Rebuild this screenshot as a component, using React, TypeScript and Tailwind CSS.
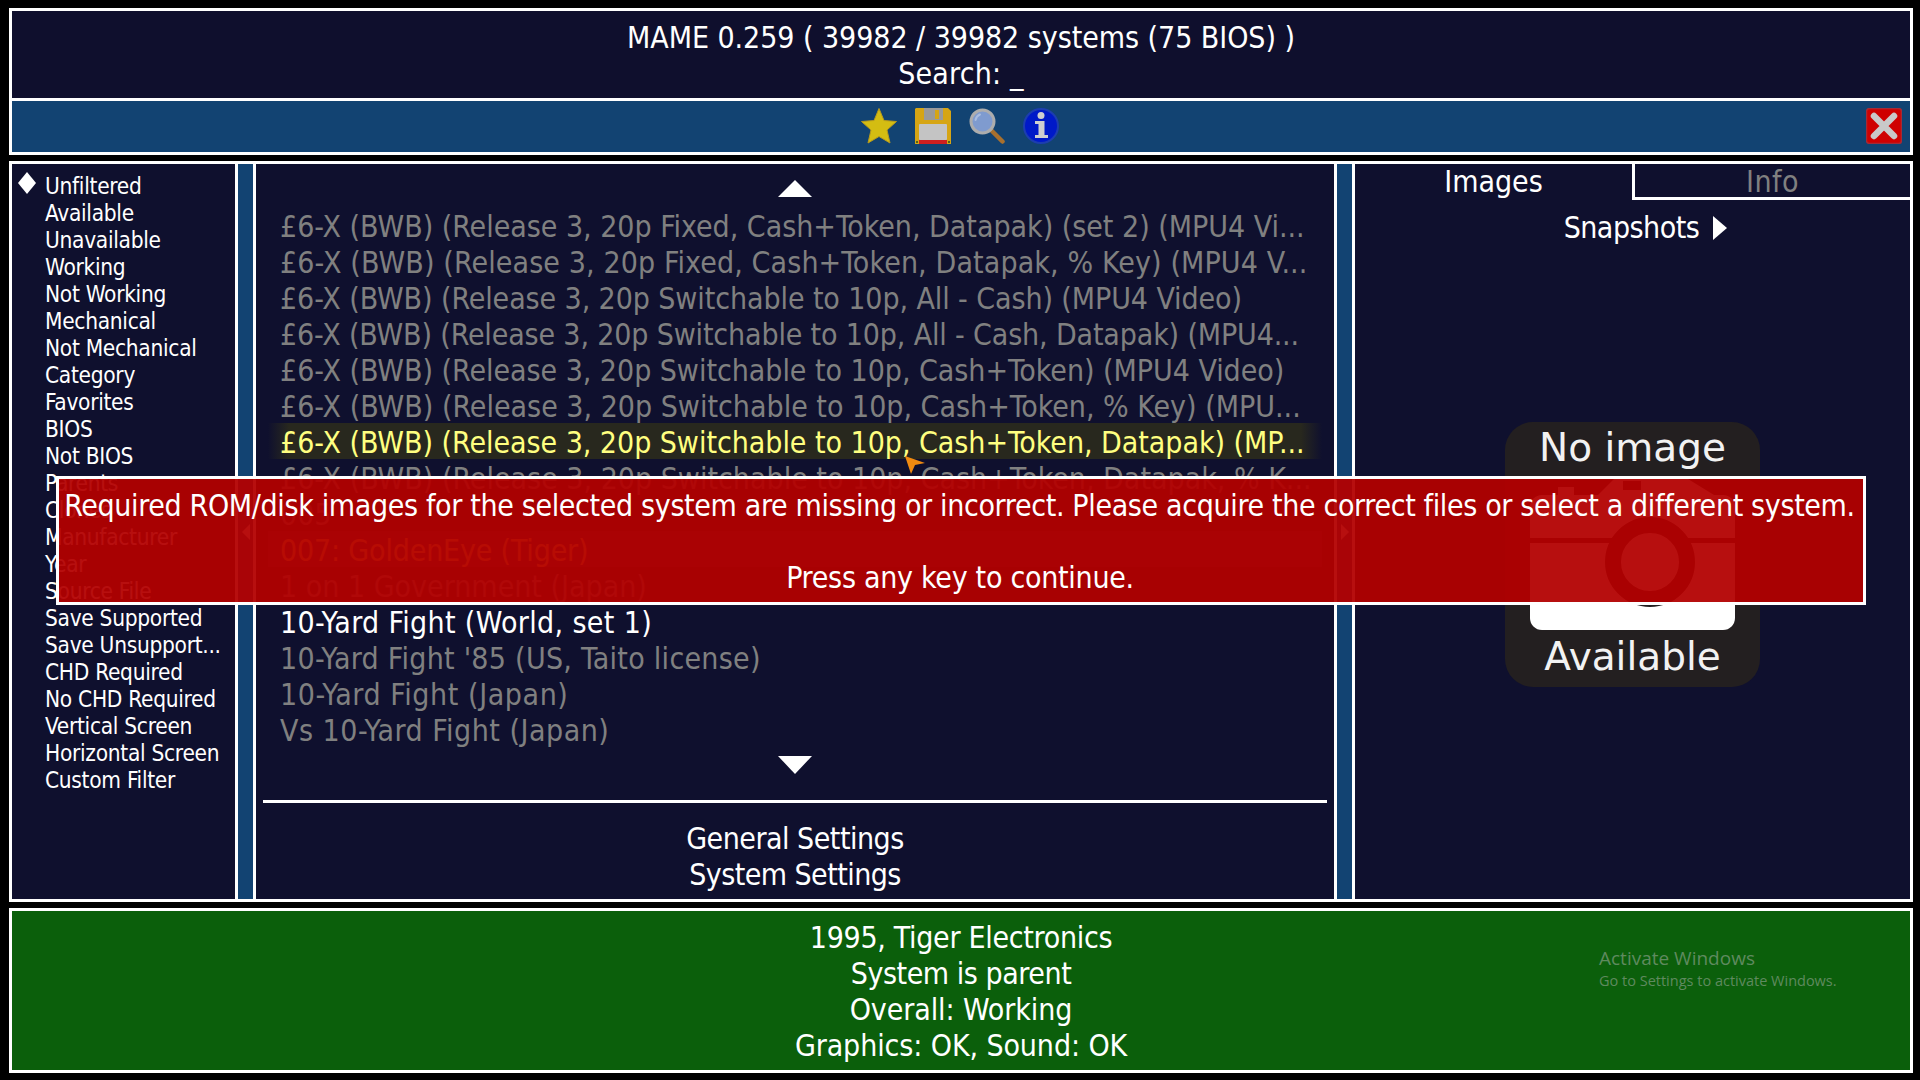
const FILTERS = [
  "Unfiltered", "Available", "Unavailable", "Working", "Not Working", "Mechanical", "Not Mechanical", "Category",
  "Favorites", "BIOS", "Not BIOS", "Parents", "Clones", "Manufacturer", "Year", "Source File", "Save Supported",
  "Save Unsupport...", "CHD Required", "No CHD Required", "Vertical Screen", "Horizontal Screen", "Custom Filter",
]

type Row = { name: string; kind?: "selected" | "hover" | "white"; fit: string }

// fit = small tracking so each line ends where the reference's does
const ROWS: Row[] = [
  { name: "£6-X (BWB) (Release 3, 20p Fixed, Cash+Token, Datapak) (set 2) (MPU4 Vi...", fit: "tracking-[-0.02px]" },
  { name: "£6-X (BWB) (Release 3, 20p Fixed, Cash+Token, Datapak, % Key) (MPU4 V...", fit: "tracking-[0.12px]" },
  { name: "£6-X (BWB) (Release 3, 20p Switchable to 10p, All - Cash) (MPU4 Video)", fit: "tracking-[-0.09px]" },
  { name: "£6-X (BWB) (Release 3, 20p Switchable to 10p, All - Cash, Datapak) (MPU4...", fit: "tracking-[-0.15px]" },
  { name: "£6-X (BWB) (Release 3, 20p Switchable to 10p, Cash+Token) (MPU4 Video)", fit: "tracking-[-0.035px]" },
  { name: "£6-X (BWB) (Release 3, 20p Switchable to 10p, Cash+Token, % Key) (MPU...", fit: "tracking-[0px]" },
  { name: "£6-X (BWB) (Release 3, 20p Switchable to 10p, Cash+Token, Datapak) (MP...", kind: "selected", fit: "tracking-[-0.035px]" },
  { name: "£6-X (BWB) (Release 3, 20p Switchable to 10p, Cash+Token, Datapak, % K...", fit: "tracking-[0px]" },
  { name: "005", fit: "tracking-[0px]" },
  { name: "007: GoldenEye (Tiger)", kind: "hover", fit: "tracking-[-0.17px]" },
  { name: "1 on 1 Government (Japan)", fit: "tracking-[0px]" },
  { name: "10-Yard Fight (World, set 1)", kind: "white", fit: "tracking-[0.35px]" },
  { name: "10-Yard Fight '85 (US, Taito license)", fit: "tracking-[0.27px]" },
  { name: "10-Yard Fight (Japan)", fit: "tracking-[0.58px]" },
  { name: "Vs 10-Yard Fight (Japan)", fit: "tracking-[0.5px]" },
]

function StarIcon() {
  return (
    <svg width="36" height="36" viewBox="0 0 36 36">
      <path d="M18 0.5 L23 12.5 L35.5 13.5 L26 22 L29 35 L18 28.5 L7 35 L10 22 L0.5 13.5 L13 12.5 Z" fill="#d4bd12" stroke="#b89a1c" strokeWidth="1" strokeLinejoin="round" />
    </svg>
  )
}

function FloppyIcon() {
  return (
    <svg width="36" height="36" viewBox="0 0 36 36">
      <path d="M1 0 H33 L36 3 V36 H0 V1 Z" fill="#d6a514" />
      <rect x="9" y="0" width="19" height="12" fill="#9a9a9a" />
      <rect x="20" y="2" width="4" height="9" fill="#d6a514" />
      <rect x="4" y="16" width="28" height="16" rx="1" fill="#c4c4c4" />
      <rect x="4" y="32" width="28" height="4" fill="#cf1f1f" />
      <rect x="1" y="33" width="2" height="2" fill="#55621a" />
      <rect x="33" y="33" width="2" height="2" fill="#55621a" />
    </svg>
  )
}

function SearchIcon() {
  return (
    <svg width="36" height="36" viewBox="0 0 36 36">
      <line x1="23" y1="23" x2="33.5" y2="33.5" stroke="#a8702e" strokeWidth="4.5" strokeLinecap="round" />
      <circle cx="13.5" cy="13.5" r="11.5" fill="#7f9bcf" stroke="#adadad" strokeWidth="3" />
      <path d="M6.5 12 A7.5 7.5 0 0 1 11 6.5" fill="none" stroke="#a9bde0" strokeWidth="2" strokeLinecap="round" />
    </svg>
  )
}

function InfoIcon() {
  return (
    <svg width="36" height="36" viewBox="0 0 36 36">
      <circle cx="18" cy="18" r="17" fill="#0019c8" stroke="#1c3db0" strokeWidth="2" />
      <circle cx="18" cy="7.5" r="3.5" fill="#cfcfcf" />
      <path d="M12 13 H21.5 V27 H25 V30 H12 V27 H15.5 V16 H12 Z" fill="#cfcfcf" />
    </svg>
  )
}

function CloseIcon() {
  return (
    <svg width="36" height="36" viewBox="0 0 36 36">
      <rect x="0.5" y="0.5" width="35" height="35" rx="3" fill="#cf0000" stroke="#a52a35" strokeWidth="1.5" />
      <path d="M8 8 L28 28 M28 8 L8 28" stroke="#c9c9c9" strokeWidth="6.5" strokeLinecap="round" />
    </svg>
  )
}

function Camera() {
  return (
    <svg width="205" height="160" viewBox="0 0 205 160">
      <path d="M68 25 L84 9 H158 L184 25 Z" fill="#ffffff" />
      <rect x="28" y="17" width="16" height="8" fill="#ffffff" />
      <rect x="93" y="11" width="18" height="9" fill="#231f20" />
      <path d="M12 25 H193 A12 12 0 0 1 205 37 V148 A12 12 0 0 1 193 160 H12 A12 12 0 0 1 0 148 V37 A12 12 0 0 1 12 25 Z" fill="#ffffff" />
      <rect x="0" y="68" width="205" height="5" fill="#231f20" />
      <circle cx="120" cy="92" r="37" fill="#ffffff" stroke="#231f20" strokeWidth="16" />
    </svg>
  )
}

export default function App() {
  return (
    <div className="relative w-[1920px] h-[1080px] bg-black overflow-hidden pl-[9px] pr-[7px] pt-[8px] text-white font-['DejaVu_Sans',sans-serif] [font-stretch:condensed] text-[30px] leading-[36px]">
      {/* Header + toolbar */}
      <div className="h-[147px] border-[3px] border-white flex flex-col">
        <div className="h-[87px] bg-[#0f0f2d] pt-[9px] text-center">
          <div className="tracking-[-0.05px]">MAME 0.259 ( 39982 / 39982 systems (75 BIOS) )</div>
          <div className="tracking-[0.2px]">Search: _</div>
        </div>
        <div className="h-[54px] border-t-[3px] border-white bg-[#124372] relative flex items-center justify-center gap-[18px] pr-[3px] pb-[1px]">
          <StarIcon />
          <FloppyIcon />
          <SearchIcon />
          <InfoIcon />
          <div className="absolute right-[8px] top-[7px]"><CloseIcon /></div>
        </div>
      </div>

      {/* Main panels */}
      <div className="mt-[6px] h-[741px] border-[3px] border-white bg-[#0f102e] flex">
        {/* Filters */}
        <div className="w-[223px] shrink-0 pt-[9px] pl-[33px] text-[22.5px] leading-[27px] tracking-[-0.3px] relative">
          {FILTERS.map((f, i) => (
            <div key={f} className="relative whitespace-nowrap">
              {i === 0 && <span className="absolute left-[-27px] top-[-1px] w-[18px] h-[22px] bg-white [clip-path:polygon(50%_0,100%_50%,50%_100%,0_50%)]" />}
              {f}
            </div>
          ))}
        </div>
        <div className="w-[21px] shrink-0 border-x-[3px] border-white bg-[#124372] flex items-center justify-center">
          <span className="w-0 h-0 border-y-[8px] border-y-transparent border-r-[8px] border-r-white" />
        </div>

        {/* System list */}
        <div className="w-[1078px] shrink-0 flex flex-col">
          <div className="h-[43px] pt-[16px] flex justify-center">
            <span className="w-0 h-0 border-x-[17px] border-x-transparent border-b-[17px] border-b-white" />
          </div>
          {ROWS.map(r => (
            <div
              key={r.name}
              className={`h-[36px] mx-[12px] pl-[12px] pt-[2px] whitespace-nowrap overflow-hidden ${r.fit} ${
                r.kind === "selected"
                  ? "text-[#ffff80] bg-[linear-gradient(90deg,#0f102e,#28281e_2%,#28281e_98%,#0f102e)]"
                  : r.kind === "hover"
                  ? "text-[#ffc040] bg-[#2a2a48]"
                  : r.kind === "white"
                  ? "text-white"
                  : "text-[#808080]"
              }`}
            >
              {r.name}
            </div>
          ))}
          <div className="h-[36px] pt-[9px] flex justify-center">
            <span className="w-0 h-0 border-x-[17px] border-x-transparent border-t-[18px] border-t-white" />
          </div>
          <div className="mt-[17px] mx-[7px] h-[3px] bg-white" />
          <div className="mt-[18px] text-center">
            <div className="tracking-[-0.5px]">General Settings</div>
            <div className="tracking-[-0.55px]">System Settings</div>
          </div>
        </div>
        <div className="w-[21px] shrink-0 border-x-[3px] border-white bg-[#124372] flex items-center justify-center">
          <span className="w-0 h-0 border-y-[8px] border-y-transparent border-l-[8px] border-l-white" />
        </div>

        {/* Images / info panel */}
        <div className="flex-1 flex flex-col items-center">
          <div className="w-full h-[36px] flex">
            <div className="w-[277px] text-center">Images</div>
            <div className="flex-1 border-l-[3px] border-b-[3px] border-white text-center text-[#808080] leading-[35px] tracking-[0.5px]">Info</div>
          </div>
          <div className="mt-[10px] h-[36px] flex items-center gap-[14px] pl-[26px]">
            <span className="tracking-[-0.5px]">Snapshots</span>
            <span className="w-0 h-0 border-y-[12px] border-y-transparent border-l-[14px] border-l-white" />
          </div>
          <div className="mt-[176px] w-[255px] h-[265px] rounded-[28px] bg-[#231f20] flex flex-col items-center text-[#f2f2f2] font-['DejaVu_Sans',sans-serif] [font-stretch:normal] text-[39px] leading-[48px]">
            <div className="h-[48px] pt-[2px]">No image</div>
            <Camera />
            <div className="h-[57px] pt-[3px]">Available</div>
          </div>
        </div>
      </div>

      {/* Info panel */}
      <div className="mt-[6px] h-[165px] border-[3px] border-white bg-[#0b5f0b] pt-[9px] text-center">
        <div className="tracking-[-0.3px]">1995, Tiger Electronics</div>
        <div className="tracking-[-0.45px]">System is parent</div>
        <div className="tracking-[-0.08px]">Overall: Working</div>
        <div className="tracking-[-0.1px]">Graphics: OK, Sound: OK</div>
      </div>

      {/* Windows watermark */}
      <div className="absolute left-[1599px] top-[944px] text-[#5f8a5f] font-['Open_Sans',sans-serif] [font-stretch:normal]">
        <div className="text-[19px] leading-[28px]">Activate Windows</div>
        <div className="text-[14.5px] leading-[18px]">Go to Settings to activate Windows.</div>
      </div>

      {/* Error dialog */}
      <div className="absolute left-[56px] top-[476px] w-[1810px] h-[129px] border-[3px] border-white bg-[rgba(178,0,0,0.94)] pt-[9px] text-center whitespace-nowrap">
        <div className="tracking-[-0.35px] pr-[3px]">Required ROM/disk images for the selected system are missing or incorrect. Please acquire the correct files or select a different system.</div>
        <div>&nbsp;</div>
        <div className="tracking-[-0.28px] pr-[2px]">Press any key to continue.</div>
      </div>

      {/* Mouse pointer */}
      <svg className="absolute left-[905px] top-[456px]" width="20" height="18" viewBox="0 0 20 18">
        <path d="M0 0 L20 7 L10 9 L6 18 Z" fill="#f08a10" />
      </svg>
    </div>
  )
}
